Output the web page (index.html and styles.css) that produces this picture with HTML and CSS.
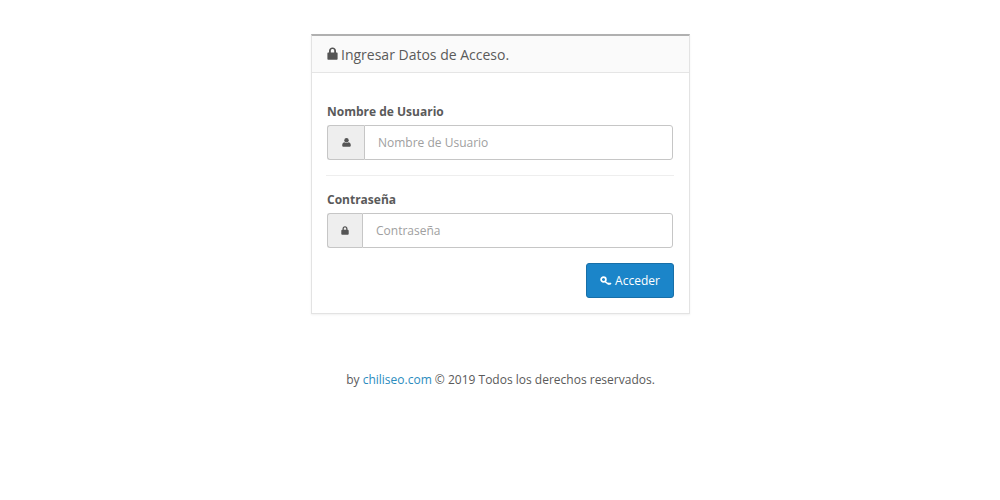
FILE: index.html
```html
<!DOCTYPE html>
<html lang="es">
<head>
<meta charset="utf-8">
<title>Ingresar</title>
<link rel="stylesheet" href="styles.css">
</head>
<body>
<main class="page">
  <section class="panel">
    <header class="panel-head">
      <svg class="head-icon" viewBox="0 0 11 13" width="11" height="13"><path d="M2 5.500V3.800C2 1.800 3.500.4 5.500.4S9 1.800 9 3.800v1.700h.6c.6 0 1 .4 1 1v5.200c0 .6-.4 1-1 1H1.400c-.6 0-1-.4-1-1V6.500c0-.6.4-1 1-1zm1.800 0h3.400V3.800c0-1-.7-1.700-1.700-1.700s-1.700.7-1.700 1.700z" fill="#555"/></svg>
      <h1 class="panel-title">Ingresar Datos de Acceso.</h1>
    </header>
    <form class="panel-body">
      <div class="field">
        <label class="label">Nombre de Usuario</label>
        <div class="group">
          <span class="addon addon-user">
            <svg viewBox="0 0 9 9" width="9" height="9"><circle cx="4.500" cy="2.300" r="2.200" fill="#555"/><path d="M.2 7.200C.2 5.400 1.400 4.400 2.500 4.300c.5.5 1.200.7 2 .7s1.500-.2 2-.7c1.100.1 2.300 1.100 2.300 2.900 0 1-.6 1.600-1.500 1.600H1.700C.8 8.800.2 8.200.2 7.200z" fill="#555"/></svg>
          </span>
          <input class="input" type="text" placeholder="Nombre de Usuario">
        </div>
      </div>
      <hr class="divider">
      <div class="field">
        <label class="label">Contraseña</label>
        <div class="group">
          <span class="addon addon-lock">
            <svg viewBox="0 0 8 9" width="8" height="9"><path d="M1.500 3.800V2.700C1.500 1.200 2.500.2 4 .2s2.500 1 2.500 2.500v1.100h.3c.5 0 .9.4.9.9v3.300c0 .5-.4.8-.9.8H1.200c-.5 0-.9-.3-.9-.8V4.700c0-.5.4-.9.9-.9zm1.300 0h2.400V2.700C5.200 2 4.700 1.500 4 1.500s-1.200.5-1.200 1.200z" fill="#555"/></svg>
          </span>
          <input class="input" type="password" placeholder="Contraseña">
        </div>
      </div>
      <div class="actions">
        <button class="btn" type="button">
          <svg viewBox="0 0 12 10" width="12" height="10"><circle cx="3.500" cy="3.500" r="2.400" fill="none" stroke="#fff" stroke-width="1.700"/><path d="M5.300 5 L8.200 7 L9 6.200 L9.900 7.200 L10.700 6.500 L11.500 7.500 L10 9 L9 8.400 L8.400 9 L5 6.500 z" fill="#fff"/></svg>
          Acceder
        </button>
      </div>
    </form>
  </section>
  <footer class="foot">by <a class="foot-link" href="#">chiliseo.com</a> © 2019 Todos los derechos reservados.</footer>
</main>
</body>
</html>
```
FILE: styles.css
```css
* { box-sizing: border-box; }
html, body { margin: 0; padding: 0; }
body {
  background: #fff;
  color: #5a5a5a;
  font-family: "Open Sans", "Liberation Sans", sans-serif;
  font-size: 12px;
}
.page {
  display: flex;
  flex-direction: column;
  align-items: center;
  padding-top: 34px;
  padding-left: 1px;
}
.panel {
  width: 379px;
  height: 280px;
  border: 1px solid #e3e3e3;
  border-top: 2px solid #b0b0b0;
  box-shadow: 0 1px 2px rgba(0, 0, 0, .06);
}
.panel-head {
  display: flex;
  align-items: center;
  gap: 3px;
  height: 37px;
  padding: 1px 15px 0;
  background: #fafafa;
  border-bottom: 1px solid #e5e5e5;
}
.head-icon { flex: none; margin-top: -3px; }
.panel-title {
  margin: 0;
  font-size: 14px;
  font-weight: 400;
  line-height: 20px;
  color: #5a5a5a;
}
.panel-body {
  display: flex;
  flex-direction: column;
  padding: 30px 15px 0;
}
.field { display: flex; flex-direction: column; }
.label {
  font-size: 12px;
  font-weight: 700;
  line-height: 18px;
  margin-bottom: 4px;
  color: #5a5a5a;
}
.group {
  display: flex;
  width: 346px;
  height: 35px;
}
.addon {
  display: flex;
  align-items: center;
  justify-content: center;
  flex: none;
  background: #eee;
  border: 1px solid #c6c6c6;
  border-right: 0;
  border-radius: 3px 0 0 3px;
}
.addon-user { width: 37px; }
.addon-lock { width: 35px; }
.input {
  flex: 1;
  min-width: 0;
  height: 35px;
  padding: 0 13px;
  border: 1px solid #c6c6c6;
  border-radius: 0 3px 3px 0;
  background: #fff;
  color: #5a5a5a;
  font: 12px "Open Sans", "Liberation Sans", sans-serif;
  outline: 0;
}
.input::placeholder { color: #a0a0a0; opacity: 1; }
.divider {
  width: 348px;
  margin: 15px 0 15px -1px;
  border: 0;
  border-top: 1px solid #eee;
}
.actions {
  display: flex;
  justify-content: flex-end;
  margin-top: 15px;
}
.btn {
  display: flex;
  align-items: center;
  justify-content: center;
  gap: 3px;
  width: 88px;
  height: 35px;
  padding: 0;
  background: #1b85c9;
  border: 1px solid #176fa8;
  border-radius: 3px;
  color: #fff;
  font: 12px "Open Sans", "Liberation Sans", sans-serif;
}
.foot {
  margin-top: 57px;
  line-height: 18px;
  color: #5a5a5a;
}
.foot-link { color: #2b8cbe; text-decoration: none; }
```
